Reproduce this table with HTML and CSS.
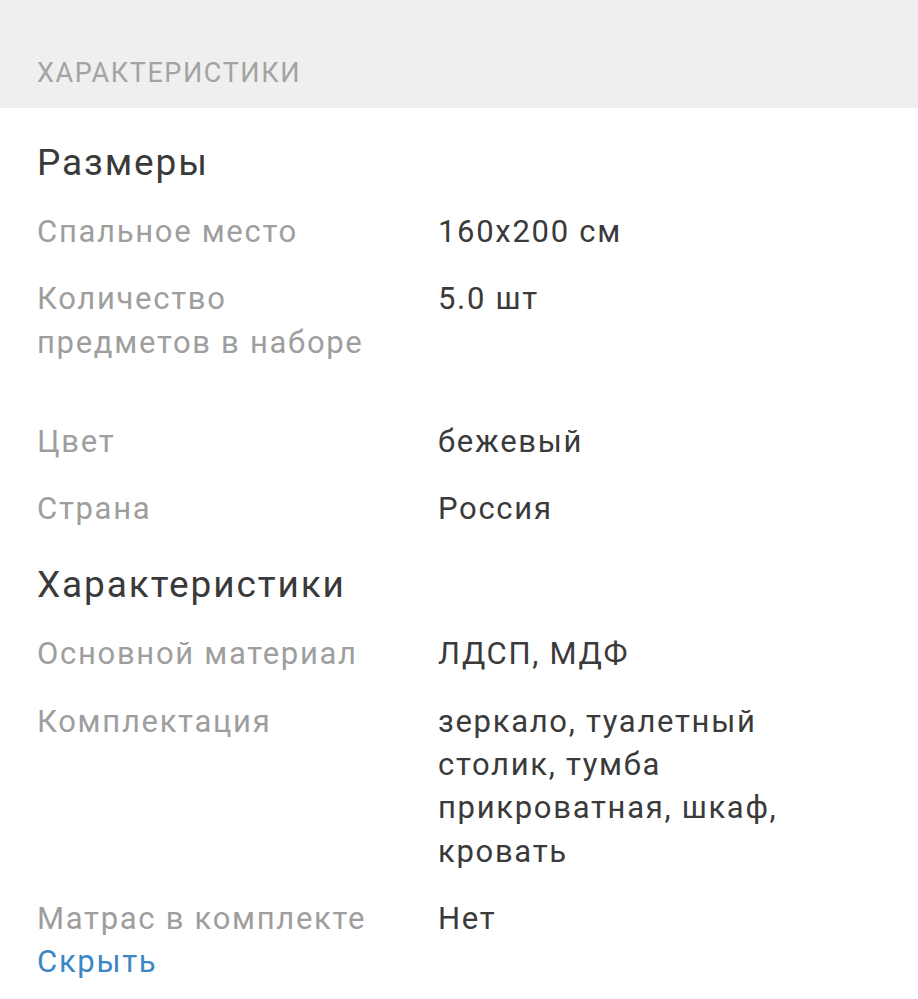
FILE: index.html
```html
<!DOCTYPE html>
<html lang="ru">
<head>
<meta charset="utf-8">
<title>Характеристики</title>
<link rel="stylesheet" href="styles.css">
</head>
<body>
<div class="band"><span class="band-title">ХАРАКТЕРИСТИКИ</span></div>
<section class="specs">
  <h2 class="group-title group-title--first">Размеры</h2>
  <dl class="rows">
    <div class="row"><dt>Спальное место</dt><dd>160x200 см</dd></div>
    <div class="row row--spaced"><dt>Количество предметов в наборе</dt><dd>5.0 шт</dd></div>
    <div class="row"><dt>Цвет</dt><dd>бежевый</dd></div>
    <div class="row"><dt>Страна</dt><dd>Россия</dd></div>
  </dl>
  <h2 class="group-title">Характеристики</h2>
  <dl class="rows">
    <div class="row"><dt>Основной материал</dt><dd>ЛДСП, МДФ</dd></div>
    <div class="row"><dt>Комплектация</dt><dd>зеркало, туалетный столик, тумба прикроватная, шкаф, кровать</dd></div>
    <div class="row"><dt>Матрас в комплекте</dt><dd>Нет</dd></div>
  </dl>
  <a class="toggle" href="#">Скрыть</a>
</section>
</body>
</html>
```

FILE: styles.css
```css
html, body {
  margin: 0;
  padding: 0;
  background: #ffffff;
}
body {
  font-family: Roboto, "Noto Sans", sans-serif;
  width: 918px;
}
.band {
  background: #efefef;
  height: 108px;
  box-sizing: border-box;
  padding: 52px 37px 0;
}
.band-title {
  display: block;
  font-size: 27px;
  line-height: 42px;
  color: #a3a3a3;
  letter-spacing: 1.6px;
}
.specs {
  padding: 0 37px;
}
.group-title {
  margin: 30px 0 22px;
  font-size: 37px;
  line-height: 50px;
  font-weight: 400;
  color: #3a3a3a;
  letter-spacing: 1.9px;
}
.rows {
  margin: 0;
  display: flex;
  flex-direction: column;
  gap: 24px;
}
.row {
  display: grid;
  grid-template-columns: 401px 1fr;
  font-size: 31px;
  line-height: 43.3px;
  letter-spacing: 1.7px;
}
.row--spaced {
  margin-bottom: 32px;
}
.row dt {
  color: #9e9e9e;
  padding-right: 56px;
}
.row dd {
  margin: 0;
  color: #3a3a3a;
  padding-right: 60px;
}
.toggle {
  display: block;
  font-size: 31px;
  line-height: 43px;
  letter-spacing: 1.7px;
  color: #3b87c6;
  text-decoration: none;
}
```
